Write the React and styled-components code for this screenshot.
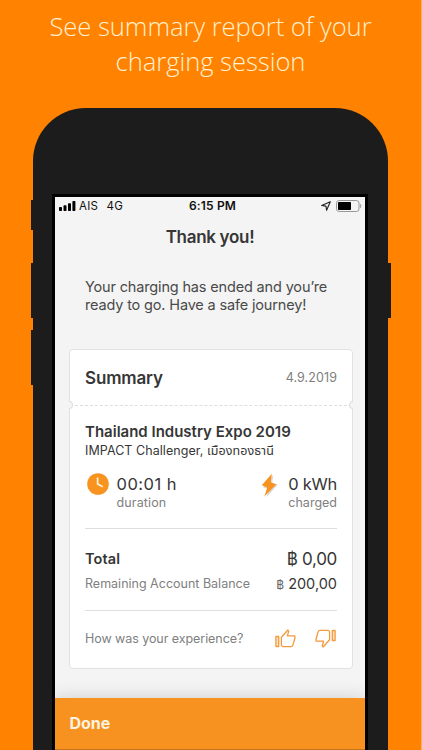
import React from "react";
import styled, { createGlobalStyle } from "styled-components";

function App() {
  return (
    <Page>
      <GlobalStyle />
      <Headline>
        See summary report of your
        <br />
        charging session
      </Headline>
      <Phone>
        <SideButton $side="left" $top={92} $height={30} />
        <SideButton $side="left" $top={155} $height={55} />
        <SideButton $side="left" $top={222} $height={55} />
        <SideButton $side="right" $top={155} $height={55} />
        <Screen>
          <StatusBar />
          <Title>Thank you!</Title>
          <Message>
            Your charging has ended and you’re
            <br />
            ready to go. Have a safe journey!
          </Message>
          <SummaryCard />
          <Footer>Done</Footer>
        </Screen>
      </Phone>
    </Page>
  );
}

export default App;

function StatusBar() {
  return (
    <Status>
      <Carrier>
        <svg width="17" height="10" viewBox="0 0 17 10">
          <rect x="0" y="6" width="3" height="4" rx="0.8" />
          <rect x="4.5" y="4.3" width="3" height="5.7" rx="0.8" />
          <rect x="9" y="2.2" width="3" height="7.8" rx="0.8" />
          <rect x="13.4" y="0" width="3" height="10" rx="0.8" />
        </svg>
        <span>AIS</span>
        <Network>4G</Network>
      </Carrier>
      <Clock>6:15 PM</Clock>
      <Indicators>
        <svg width="10" height="10" viewBox="0 0 10 10">
          <path
            d="M9.3 0.7 L0.7 4.5 L5 5.1 L5.6 9.3 Z"
            fill="none"
            stroke="#222"
            strokeWidth="1.1"
            strokeLinejoin="round"
          />
        </svg>
        <svg width="26" height="12" viewBox="0 0 26 12">
          <rect
            x="0.5"
            y="0.5"
            width="22.5"
            height="11"
            rx="2.6"
            fill="none"
            stroke="#999"
          />
          <rect x="2" y="2" width="13" height="8" rx="0.8" fill="#000" />
          <path d="M24.4 4 Q25.8 6 24.4 8 Z" fill="#999" stroke="#999" strokeWidth="0.5" />
        </svg>
      </Indicators>
    </Status>
  );
}

function SummaryCard() {
  return (
    <Card>
      <CardHeader>
        <CardTitle>Summary</CardTitle>
        <CardDate>4.9.2019</CardDate>
        <Notch $side="left" />
        <Notch $side="right" />
      </CardHeader>
      <Place>Thailand Industry Expo 2019</Place>
      <Address>IMPACT Challenger, เมืองทองธานี</Address>
      <Stats>
        <Stat>
          <ClockIcon />
          <div>
            <StatValue $spacing="0.5px">00:01 h</StatValue>
            <StatLabel $spacing="0.14px">duration</StatLabel>
          </div>
        </Stat>
        <Stat $right>
          <BoltIcon />
          <div>
            <StatValue $spacing="-0.25px">0 kWh</StatValue>
            <StatLabel>charged</StatLabel>
          </div>
        </Stat>
      </Stats>
      <Totals>
        <TotalRow>
          <TotalLabel>Total</TotalLabel>
          <TotalValue>฿ 0,00</TotalValue>
        </TotalRow>
        <BalanceRow>
          <BalanceLabel>Remaining Account Balance</BalanceLabel>
          <BalanceValue>
            <small>฿</small> 200,00
          </BalanceValue>
        </BalanceRow>
      </Totals>
      <Feedback>
        <Question>How was your experience?</Question>
        <Thumbs>
          <ThumbIcon />
          <ThumbIcon down />
        </Thumbs>
      </Feedback>
    </Card>
  );
}

function ClockIcon() {
  return (
    <svg width="22" height="22" viewBox="0 0 22 22">
      <circle cx="11" cy="11" r="10.8" fill="#f7931e" />
      <path
        d="M10.6 4.4 V11 L15.8 13.7"
        fill="none"
        stroke="#fff3df"
        strokeWidth="1.7"
      />
    </svg>
  );
}

function BoltIcon() {
  return (
    <svg width="18" height="25" viewBox="0 0 18 25">
      <path d="M12.5 1.5 L2 14.5 L7.6 15.8 L5.5 24.2 L17 11.5 L11.2 9.8 Z" fill="#d9d9d9" />
      <path d="M10.8 0.8 L0.8 12.2 L6.2 14.6 L3.4 23.5 L15.2 11.6 L9.8 9.2 Z" fill="#f7931e" />
    </svg>
  );
}

function ThumbIcon({ down }) {
  return (
    <svg width="21" height="19" viewBox="0 0 21 19">
      <g
        transform={down ? "rotate(180 10.5 9.5)" : undefined}
        fill="none"
        stroke="#f39a3d"
        strokeWidth="1.3"
        strokeLinejoin="round"
      >
        <rect x="0.9" y="7.5" width="2.8" height="10" fill="#fde3c3" />
        <path d="M6.4 8.2 L12.9 1 L13.7 2.2 L12.4 6.9 H19.8 L20 8.8 L17.9 16.1 Q17.4 17.6 16 17.6 H7.6 L6.4 16.4 Z" />
      </g>
    </svg>
  );
}

const GlobalStyle = createGlobalStyle`
  * {
    box-sizing: border-box;
  }
  body {
    margin: 0;
    overflow: hidden;
  }
  svg {
    display: block;
    flex: none;
  }
`;

const Page = styled.div`
  width: 422px;
  height: 750px;
  overflow: hidden;
  background: #ff8200;
  border-right: 1px solid #ffb062;
  display: flex;
  flex-direction: column;
  font-family: Inter, "Noto Sans", "Noto Sans Thai", sans-serif;
  color: #363636;
`;

const Headline = styled.h1`
  margin: 0;
  height: 107.5px;
  padding-top: 10px;
  flex: none;
  font-family: "Open Sans", sans-serif;
  font-size: 25.6px;
  font-weight: 300;
  line-height: 34.5px;
  letter-spacing: -0.05px;
  text-align: center;
  color: #fff0cf;
  white-space: nowrap;
`;

const Phone = styled.div`
  position: relative;
  flex: none;
  width: 355px;
  height: 642.5px;
  margin-left: 33px;
  padding: 86.5px 20px 0 19px;
  background: #1c1c1c;
  border-radius: 53px 53px 0 0;
`;

const SideButton = styled.div`
  position: absolute;
  ${({ $side }) => $side}: -2.5px;
  top: ${({ $top }) => $top}px;
  width: 4px;
  height: ${({ $height }) => $height}px;
  background: #1c1c1c;
`;

const Screen = styled.div`
  height: 556px;
  border: 3px solid #000;
  border-bottom: 0;
  background: #f4f4f4;
  display: flex;
  flex-direction: column;
`;

const Status = styled.div`
  flex: none;
  height: 18px;
  padding: 0 3px 0 4px;
  display: grid;
  grid-template-columns: 1fr auto 1fr;
  align-items: center;
  font-size: 11.5px;
  line-height: 18px;
  color: #111;
`;

const Carrier = styled.div`
  display: flex;
  align-items: center;
  gap: 3px;
  letter-spacing: 0.2px;
`;

const Network = styled.span`
  margin-left: 5.5px;
`;

const Clock = styled.div`
  font-weight: 600;
  font-size: 12px;
  letter-spacing: 0.15px;
  padding-left: 4px;
`;

const Indicators = styled.div`
  display: flex;
  align-items: center;
  justify-content: flex-end;
  gap: 5px;
`;

const Title = styled.h2`
  margin: 10px 0 0;
  font-size: 17px;
  font-weight: 600;
  line-height: 24px;
  letter-spacing: -0.3px;
  text-align: center;
`;

const Message = styled.p`
  margin: 29.4px 0 0;
  padding-left: 30px;
  font-size: 14.5px;
  line-height: 17.4px;
  letter-spacing: -0.16px;
  color: #4a4a4a;
  white-space: nowrap;
`;

const Card = styled.section`
  flex: none;
  margin: 35.8px 12px 0 14px;
  height: 319.5px;
  padding: 0 15px;
  background: #fff;
  border: 1px solid #e2e2e2;
  border-radius: 4px;
  white-space: nowrap;
`;

const CardHeader = styled.header`
  position: relative;
  height: 56px;
  margin: 0 -15px;
  padding: 0 15px;
  display: flex;
  align-items: center;
  justify-content: space-between;
  border-bottom: 1px dashed #dedede;
`;

const CardTitle = styled.h3`
  margin: 0;
  font-size: 17px;
  font-weight: 600;
  letter-spacing: -0.15px;
`;

const CardDate = styled.span`
  font-size: 12.5px;
  letter-spacing: 0.1px;
  color: #808080;
`;

const Notch = styled.i`
  position: absolute;
  ${({ $side }) => $side}: -1px;
  bottom: -4px;
  width: 4px;
  height: 8px;
  background: #f4f4f4;
  border: 1px solid #dedede;
  border-${({ $side }) => $side}: 0;
  border-radius: ${({ $side }) =>
    $side === "left" ? "0 4px 4px 0" : "4px 0 0 4px"};
`;

const Place = styled.h4`
  margin: 16px 0 0;
  font-size: 15px;
  font-weight: 600;
  line-height: 20px;
`;

const Address = styled.div`
  font-size: 12.5px;
  line-height: 17px;
  height: 17px;
  letter-spacing: 0.06px;
`;

const Stats = styled.div`
  margin-top: 14px;
  height: 56px;
  display: flex;
  justify-content: space-between;
  border-bottom: 1px solid #dedede;
`;

const Stat = styled.div`
  display: flex;
  align-items: flex-start;
  gap: ${({ $right }) => ($right ? 9 : 7.5)}px;
  padding-left: 2px;
  text-align: ${({ $right }) => ($right ? "right" : "left")};
`;

const StatValue = styled.div`
  font-size: 16.5px;
  line-height: 22px;
  letter-spacing: ${({ $spacing }) => $spacing};
`;

const StatLabel = styled.div`
  font-size: 12.5px;
  line-height: 15px;
  letter-spacing: ${({ $spacing }) => $spacing || "0"};
  color: #808080;
`;

const Totals = styled.div`
  height: 82px;
  padding-top: 17px;
  border-bottom: 1px solid #dedede;
`;

const TotalRow = styled.div`
  display: flex;
  justify-content: space-between;
  align-items: center;
  height: 25px;
`;

const BalanceRow = styled(TotalRow)`
  height: 24px;
`;

const TotalLabel = styled.span`
  font-size: 14.5px;
  font-weight: 600;
  letter-spacing: 0.1px;
`;

const TotalValue = styled.span`
  font-size: 17px;
  letter-spacing: -0.3px;
`;

const BalanceLabel = styled.span`
  font-size: 12.5px;
  color: #808080;
`;

const BalanceValue = styled.span`
  font-size: 14.5px;

  small {
    font-size: 12px;
    color: #666;
  }
`;

const Feedback = styled.div`
  height: 54px;
  display: flex;
  align-items: center;
  justify-content: space-between;
`;

const Question = styled.span`
  font-size: 12.5px;
  letter-spacing: -0.06px;
  color: #808080;
`;

const Thumbs = styled.div`
  display: flex;
  gap: 19px;
  padding-right: 1px;
`;

const Footer = styled.footer`
  margin-top: auto;
  flex: none;
  height: 52.5px;
  padding: 0 14.5px;
  display: flex;
  align-items: center;
  background: #f79220;
  border-bottom: 1px solid #c87518;
  box-shadow: 0 0 18px rgba(0, 0, 0, 0.16);
  clip-path: inset(-30px 0 0 0);
  font-size: 16px;
  font-weight: 700;
  color: #fff3df;
`;
